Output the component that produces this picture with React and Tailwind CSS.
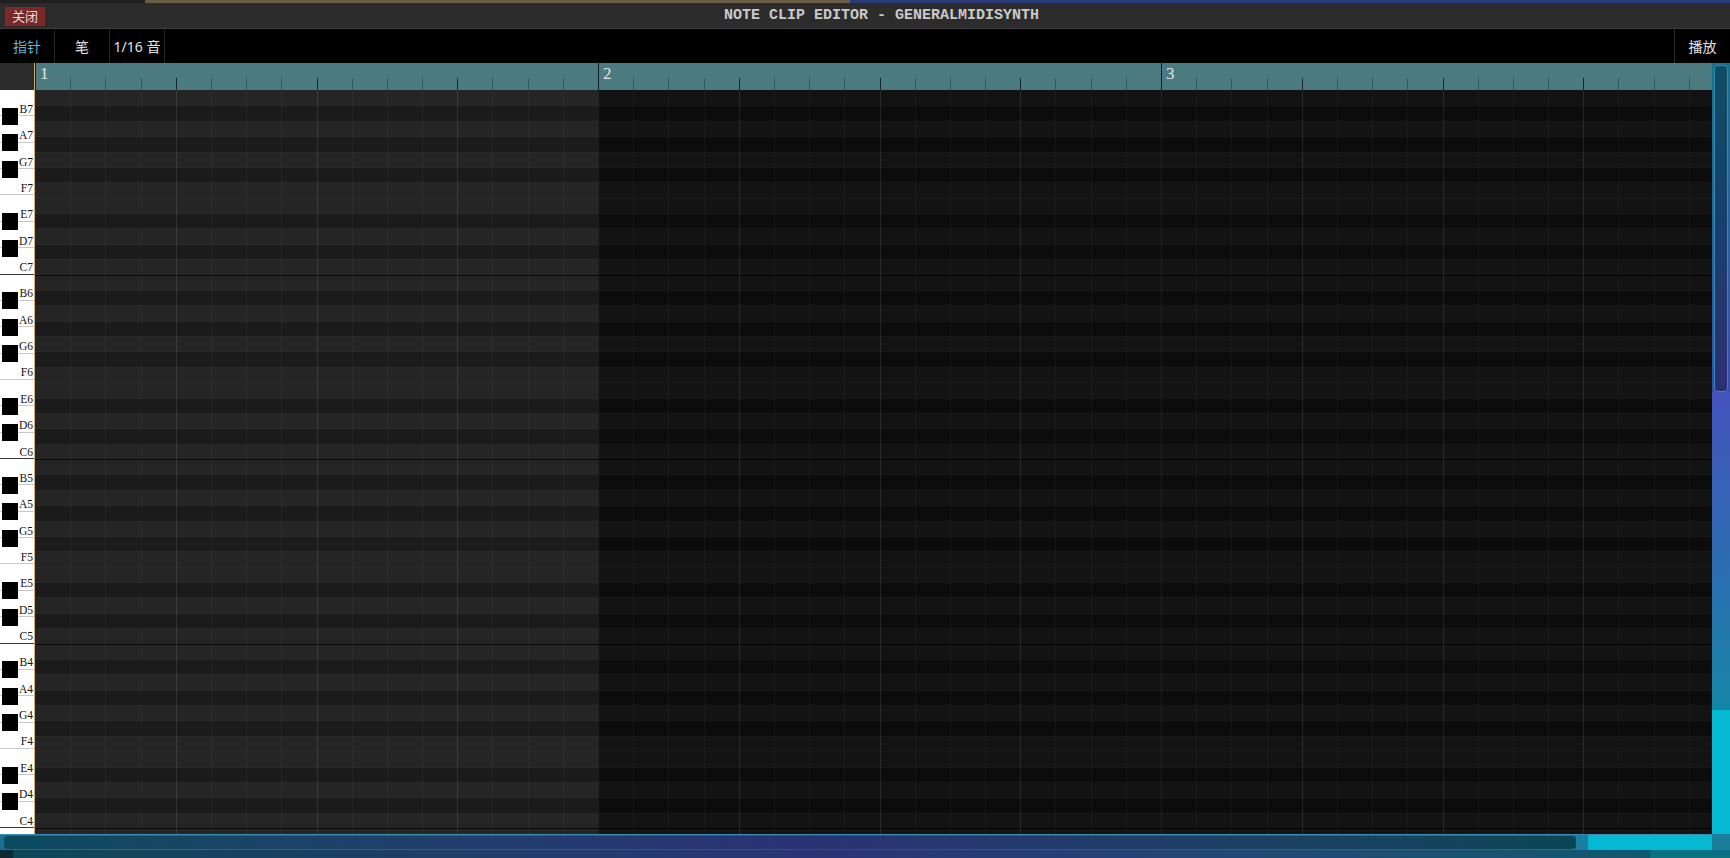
import clsx from 'clsx'

const WHITE = ['B', 'A', 'G', 'F', 'E', 'D', 'C']
const OCTAVES = [7, 6, 5, 4]
const BLACK = [1, 3, 5, 8, 10]

function Octave({ n }) {
  return (
    <div className="relative shrink-0">
      {WHITE.map((w) => (
        <div
          key={w}
          className={clsx(
            'h-[26.37px] flex items-end justify-end pr-[1px] border-b',
            w === 'C' ? 'border-[#3a3a3a]' : 'border-[#c8c8c8]'
          )}
        >
          <span className="font-['Liberation_Serif',serif] text-[11.5px] leading-none text-[#111]">
            {w}
            {n}
          </span>
        </div>
      ))}
      {/* black keys sit on top of the white ones */}
      <div className="absolute left-[2px] top-[17.9px] w-[16px] h-[17px] bg-black" />
      <div className="absolute left-[2px] top-[44.2px] w-[16px] h-[17px] bg-black" />
      <div className="absolute left-[2px] top-[70.6px] w-[16px] h-[17px] bg-black" />
      <div className="absolute left-[2px] top-[123.4px] w-[16px] h-[17px] bg-black" />
      <div className="absolute left-[2px] top-[149.7px] w-[16px] h-[17px] bg-black" />
    </div>
  )
}

function Keyboard() {
  return (
    <div className="w-[35px] shrink-0 bg-white border-r border-[#d2ad6e] overflow-hidden flex flex-col">
      {OCTAVES.map((o) => (
        <Octave key={o} n={o} />
      ))}
    </div>
  )
}

function Ruler() {
  return (
    <div className="h-[27px] shrink-0 flex">
      <div className="w-[35px] shrink-0 bg-[#2b2b2b] border-r border-[#d2ad6e]" />
      <div className="flex-1 flex overflow-hidden bg-[#4b7b80]">
        {[1, 2, 3].map((bar) => (
          <div key={bar} className="flex shrink-0">
            {Array.from({ length: 16 }, (_, k) => (
              <div
                key={k}
                className={clsx('w-[35.2px] shrink-0 flex flex-col', k === 0 && 'border-l border-[#0e1d21]')}
              >
                <div className="h-[15px] pl-[4px] pt-[2px] text-[17px] leading-none font-['Liberation_Serif',serif] text-[#dde9ea]">
                  {k === 0 ? bar : ''}
                </div>
                <div
                  className={clsx(
                    'flex-1',
                    k === 0 ? '' : k % 4 === 0 ? 'border-l border-[#14272b]' : 'border-l border-[#30595f]'
                  )}
                />
              </div>
            ))}
          </div>
        ))}
      </div>
    </div>
  )
}

function Row({ i }) {
  const s = i % 12
  const black = BLACK.includes(s)
  const oct = s === 0 && i > 0
  return (
    <div className="h-[15.385px] shrink-0 flex">
      <div
        className={clsx(
          'w-[563.2px] shrink-0 border-t',
          black ? 'bg-[#1b1b1b]' : 'bg-[#252525]',
          oct ? 'border-[#080808]' : i === 0 ? 'border-transparent' : 'border-[#292929]'
        )}
      />
      <div
        className={clsx(
          'flex-1 border-t',
          black ? 'bg-[#0c0c0c]' : 'bg-[#131313]',
          oct ? 'border-black' : i === 0 ? 'border-transparent' : 'border-[#181818]'
        )}
      />
    </div>
  )
}

function Grid() {
  return (
    <div className="flex-1 relative overflow-hidden">
      <div className="flex flex-col">
        {Array.from({ length: 49 }, (_, i) => (
          <Row key={i} i={i} />
        ))}
      </div>
      {/* grid lines drawn over the rows */}
      <div className="absolute inset-0 flex pointer-events-none">
        {Array.from({ length: 48 }, (_, k) => (
          <div
            key={k}
            className={clsx(
              'w-[35.2px] shrink-0 border-l',
              k === 0
                ? 'border-transparent'
                : k % 16 === 0
                  ? 'border-white/[0.07]'
                  : k % 4 === 0
                    ? 'border-white/[0.1]'
                    : 'border-white/[0.035]'
            )}
          />
        ))}
      </div>
    </div>
  )
}

function VScroll() {
  return (
    <div className="w-[18px] shrink-0 flex flex-col">
      <div className="h-[329px] shrink-0 bg-linear-to-b from-[#1a6f8e] to-[#3b4cae] pt-[2px] px-[2px]">
        <div className="h-full rounded-[4px] border border-[#2f8db0] bg-linear-to-b from-[#0e4c64] via-[#183e6c] to-[#2c2f72]" />
      </div>
      <div className="flex-1 bg-linear-to-b from-[#4453bd] via-[#2d6ab2] to-[#1486a6]" />
      <div className="h-[124px] shrink-0 bg-[#05b9d3]" />
    </div>
  )
}

function HScroll() {
  return (
    <div className="h-[16px] shrink-0 flex">
      <div className="w-[1712px] shrink-0 flex border-t border-[#3c8db2] bg-linear-to-r from-[#1d6f93] via-[#3447a6] to-[#1a7597]">
        <div className="w-[1576px] shrink-0 pl-[4px] py-[1px]">
          <div className="h-full rounded-[4px] bg-linear-to-r from-[#0b4a5f] via-[#2a3274] to-[#0a4656]" />
        </div>
        <div className="w-[12px] shrink-0 bg-[#1a7fa0]" />
        <div className="flex-1 bg-[#05b9d3]" />
      </div>
      <div className="flex-1 bg-[#1a7d9c]" />
    </div>
  )
}

export default function App() {
  return (
    <div className="w-[1730px] h-[858px] overflow-hidden flex flex-col bg-[#2c2c2c] font-['Noto_Sans','Noto_Sans_CJK_SC',sans-serif] select-none">
      <div className="h-[3px] shrink-0 flex">
        <div className="w-[145px] bg-[#1f1f1f]" />
        <div className="w-[705px] bg-[#6a5e47]" />
        <div className="flex-1 bg-[#2b3a78]" />
      </div>

      <div className="h-[26px] shrink-0 flex items-center border-b border-[#3d3d3d] bg-[#2c2c2c]">
        <button className="ml-[5px] mt-[2px] h-[19px] w-[40px] bg-[#7a2828] text-[13px] text-[#f0dcdc] leading-none flex items-center justify-center">
          关闭
        </button>
        <div className="flex-1 flex justify-center pr-[12px]">
          <span className="font-['Liberation_Mono',monospace] font-bold text-[15px] text-[#c9c9c9] leading-none">
            NOTE CLIP EDITOR - GENERALMIDISYNTH
          </span>
        </div>
      </div>

      <div className="h-[34px] shrink-0 bg-black flex text-[14px]">
        <div className="w-[55px] border-r border-[#242424] flex items-center justify-center text-[#6ab0da]">指针</div>
        <div className="w-[55px] border-r border-[#242424] flex items-center justify-center text-[#e2e2e2]">笔</div>
        <div className="w-[55px] border-r border-[#242424] flex items-center justify-center text-[#e2e2e2]">1/16 音</div>
        <div className="flex-1" />
        <div className="w-[56px] border-l border-[#2a2a2a] flex items-center justify-center text-[#e2e2e2]">播放</div>
      </div>

      <div className="flex-1 flex min-h-0">
        <div className="w-[1712px] shrink-0 flex flex-col">
          <Ruler />
          <div className="flex-1 flex min-h-0">
            <Keyboard />
            <Grid />
          </div>
        </div>
        <VScroll />
      </div>

      <HScroll />

      <div className="h-[8px] shrink-0 flex">
        <div className="w-[13px] bg-[#0b2a33]" />
        <div className="flex-1 bg-linear-to-r from-[#0c4757] via-[#2a3478] to-[#0e5a6f]" />
        <div className="w-[80px] bg-[#0a7282]" />
      </div>
    </div>
  )
}
